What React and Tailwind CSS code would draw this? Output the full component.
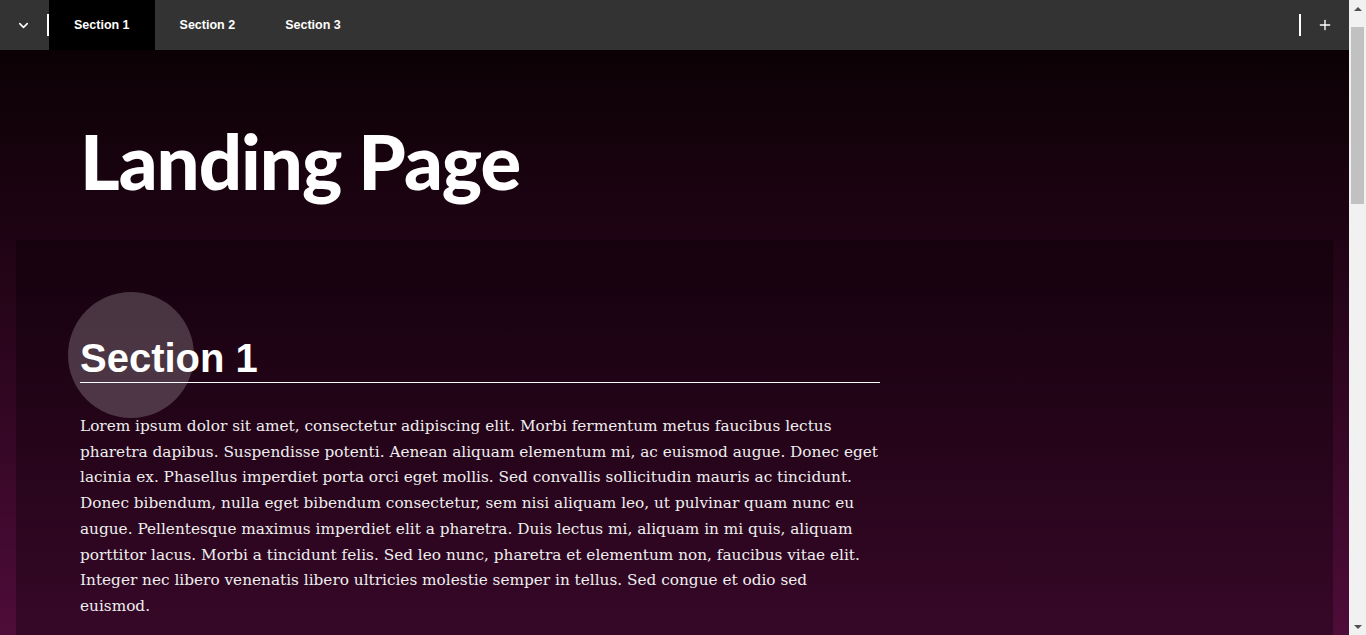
import React from 'react';
import { ChevronDown, Plus } from 'lucide-react';

const lorem =
  'Lorem ipsum dolor sit amet, consectetur adipiscing elit. Morbi fermentum metus faucibus lectus pharetra dapibus. Suspendisse potenti. Aenean aliquam elementum mi, ac euismod augue. Donec eget lacinia ex. Phasellus imperdiet porta orci eget mollis. Sed convallis sollicitudin mauris ac tincidunt. Donec bibendum, nulla eget bibendum consectetur, sem nisi aliquam leo, ut pulvinar quam nunc eu augue. Pellentesque maximus imperdiet elit a pharetra. Duis lectus mi, aliquam in mi quis, aliquam porttitor lacus. Morbi a tincidunt felis. Sed leo nunc, pharetra et elementum non, faucibus vitae elit. Integer nec libero venenatis libero ultricies molestie semper in tellus. Sed congue et odio sed euismod.';

const sections = ['Section 1', 'Section 2', 'Section 3'];

const Section = ({ title }) => {
  return (
    <section className="mx-4 bg-black/30 px-16 pt-[95px] pb-24">
      <div className="w-[800px]">
        <div className="relative">
          {/* highlight bubble behind heading */}
          <div className="absolute -left-3 -top-[43px] h-[126px] w-[126px] rounded-full bg-white/20" />
          <h2 className="relative border-b border-white pb-[1px] font-['Liberation_Sans',Arial,sans-serif] text-[40px] font-bold leading-[46px] text-white">
            {title}
          </h2>
        </div>
        <p className="mt-[31px] font-['DejaVu_Serif',serif] text-[15.3px] leading-[25.7px] text-[#eee]">
          {lorem}
        </p>
        <p className="mt-8 font-['DejaVu_Serif',serif] text-[15.3px] leading-[25.7px] text-[#eee]">
          {lorem}
        </p>
      </div>
    </section>
  );
};

const App = () => {
  return (
    <div className="flex h-screen">
      <div className="h-screen flex-1 overflow-y-auto bg-gradient-to-b from-[#070103] to-[#4e0c39] [scrollbar-width:none]">
        {/* Top bar */}
        <header className="sticky top-0 z-10 flex h-[50px] items-stretch bg-[#333] font-['Liberation_Sans',Arial,sans-serif] text-white">
          <div className="flex w-[47px] items-center justify-center">
            <ChevronDown className="h-[15px] w-[15px]" strokeWidth={2.5} />
          </div>
          <div className="my-[14px] w-[2px] bg-white" />
          <nav className="flex">
            {sections.map((s, i) => (
              <a
                key={s}
                className={`flex items-center px-[25px] text-[12.5px] font-bold ${i === 0 ? 'bg-black' : ''}`}
              >
                {s}
              </a>
            ))}
          </nav>
          <div className="flex-1" />
          <div className="my-[14px] w-[2px] bg-white" />
          <div className="flex w-[48px] items-center justify-center">
            <Plus className="h-4 w-4" strokeWidth={2} />
          </div>
        </header>

        <div className="px-20 pt-[68px] pb-[36px]">
          <h1 className="font-['Lato',sans-serif] text-[76px] font-black leading-[86px] tracking-[-1px] text-white">
            Landing Page
          </h1>
        </div>

        <main className="flex flex-col">
          {sections.map((s) => (
            <Section key={s} title={s} />
          ))}
        </main>
      </div>

      {/* window scrollbar */}
      <div className="flex w-[17px] flex-col items-center bg-[#f1f1f1]">
        <div className="flex h-[17px] items-center justify-center">
          <div className="h-0 w-0 border-x-[4px] border-b-[4px] border-x-transparent border-b-[#505050]" />
        </div>
        <div className="mt-[10px] h-[177px] w-[13px] bg-[#c1c1c1]" />
        <div className="flex-1" />
        <div className="flex h-[17px] items-center justify-center">
          <div className="h-0 w-0 border-x-[4px] border-t-[4px] border-x-transparent border-t-[#505050]" />
        </div>
      </div>
    </div>
  );
};

export default App;
